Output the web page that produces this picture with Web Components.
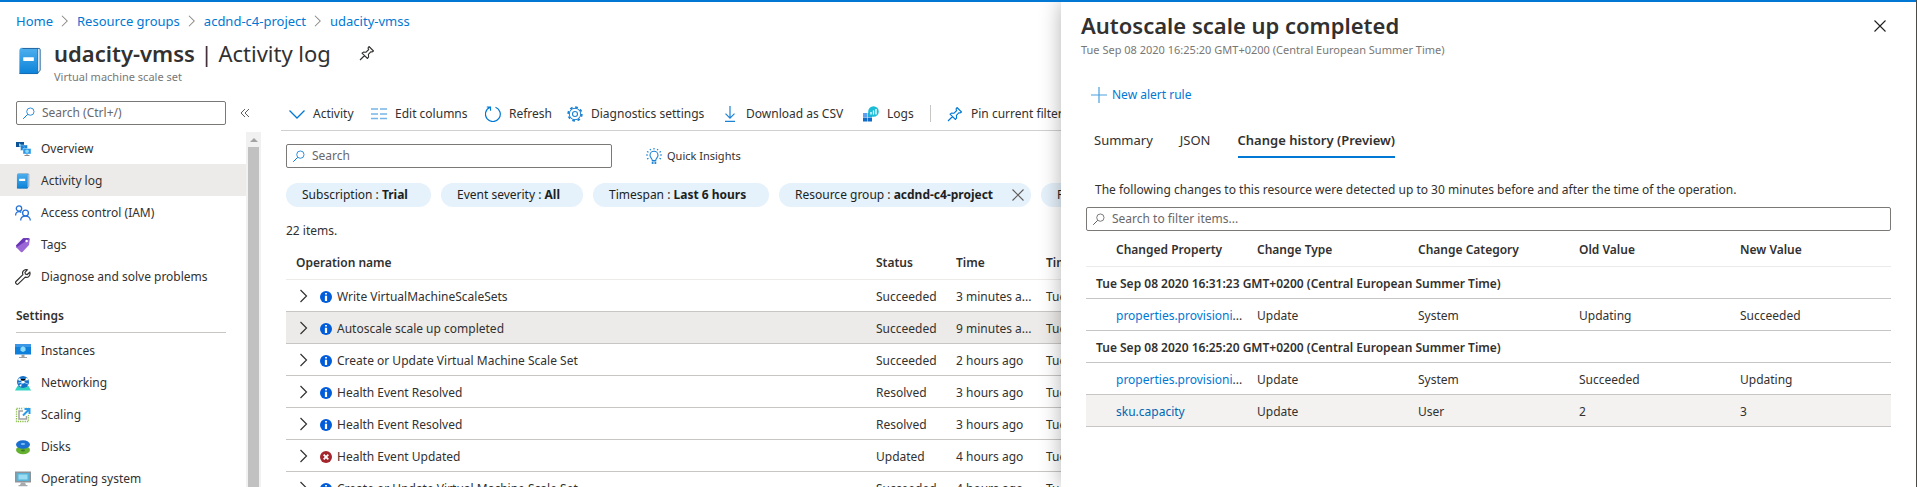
<!DOCTYPE html>
<html lang="en">
<head>
<meta charset="utf-8">
<title>udacity-vmss | Activity log</title>
<style>
  html, body { margin: 0; height: 100%; }
  body {
    font: 12px/16px "Noto Sans", "Open Sans", sans-serif;
    color: #323130;
    background: #fff;
    --link: #0078d4;
    --line: #c8c6c4;
    --line-soft: #edebe9;
  }
</style>
</head>
<body>
<portal-shell>
  <bread-crumbs slot="top"></bread-crumbs>
  <blade-title slot="top"></blade-title>
  <side-menu slot="menu"></side-menu>
  <activity-log slot="content"></activity-log>
  <detail-panel slot="detail"></detail-panel>
</portal-shell>
<script>
const define = (name, html, setup) => customElements.define(name, class extends HTMLElement {
  constructor() {
    super();
    const root = this.attachShadow({ mode: 'open' });
    const t = document.createElement('template');
    t.innerHTML = html;
    root.append(t.content.cloneNode(true));
    if (setup) setup(root);
  }
});

const book = `<defs><linearGradient id="g" x2="0" y2="1"><stop stop-color="#4fb0ee"/><stop offset="1" stop-color="#0d83d9"/></linearGradient></defs>
  <path d="M4 1.5h17.2q1.300 0 1.300 1.300V24l-2.500 3H4z" fill="#fff" stroke="#0f5b9c"/><path d="M1 4q0-3 3-3.500L4 2h16v25.500H1z" fill="url(#g)"/><path d="M20 2v25.500" stroke="#0f5b9c" stroke-width=".8"/><rect x="5" y="10.500" width="11" height="4" rx=".5" fill="#fff"/><path d="M1 27.500h19" stroke="#0c6ab4"/>`;
const chevron = '<path d="M4.500 2l6 6-6 6" fill="none" stroke="currentColor" stroke-width="1.200"/>';
const pin = '<path d="M10 1.500l4.500 4.500-1.500 1-1-.300-2.600 2.700.2 2.600-1.100 1.500L3 8.200l1.500-1.100 2.600.1L9.700 4.500 9 3zM5.600 10.500L1 15" fill="none" stroke="currentColor" stroke-width="1.100" stroke-linejoin="round"/>';
const ICONS = {
  book: ['0 0 24 29', book],
  chevron: ['0 0 16 16', chevron],
  pin: ['0 0 16 16', pin],
  search: ['0 0 16 16', '<circle cx="10.300" cy="5.700" r="4.500" fill="none" stroke="currentColor"/><path d="M7 9L1.500 14.500" stroke="currentColor" stroke-width="1.200"/>'],
  collapse: ['0 0 10 10', '<path d="M5 1L1 5l4 4M9 1L5 5l4 4" fill="none" stroke="#605e5c"/>'],
  down: ['0 0 16 16', '<path d="M.5 4.500L8 12l7.500-7.500" fill="none" stroke="#0078d4" stroke-width="1.300"/>'],
  columns: ['0 0 16 16', '<path d="M0 3h7M9 3h7M0 8h7M9 8h7M0 12.500h7M9 12.500h7" stroke="#75b5e7" stroke-width="1.700"/>'],
  refresh: ['0 0 16 16', '<path d="M10.500 1.200A7.400 7.400 0 1 1 4.800 1.400M1.800 1h3.700v3.700" fill="none" stroke="#0078d4" stroke-width="1.200"/>'],
  gear: ['0 0 16 16', '<circle cx="8" cy="8" r="6.800" fill="none" stroke="#1b82d4" stroke-width="1.800" stroke-dasharray="2.700 2.640"/><circle cx="8" cy="8" r="5.700" fill="none" stroke="#1b82d4"/><circle cx="8" cy="8" r="2.500" fill="none" stroke="#1b82d4" stroke-width="1.100"/>'],
  download: ['0 0 16 16', '<path d="M8 0v12M3.500 7.700L8 12.200l4.500-4.500M3 15.400h10" fill="none" stroke="#1b82d4" stroke-width="1.200"/>'],
  logs: ['0 0 16 16', '<path d="M0 7h4.500v4H0z" fill="#5ea0ef"/><path d="M0 11.500h4.500v4H0zM5 11.500h4v4H5z" fill="#0f6cc9"/><path d="M5 7h4v4H5z" fill="#2288e0"/><path d="M10.500.2a5.300 5.300 0 1 1 0 10.600H5.200V5.500A5.300 5.300 0 0 1 10.500.2z" fill="#1cbcd6"/><path d="M8 6v2.500M10.500 4.500v4M13 3v5.500" stroke="#fff" stroke-width="1.300"/>'],
  bulb: ['0 0 16 16', '<path d="M6.300 12.500c0-2-2.300-2.800-2.300-5.300a4 4 0 0 1 8 0c0 2.500-2.300 3.300-2.300 5.300zM6.300 14v2h3.400v-2z" fill="none" stroke="#1b82d4" stroke-width="1.100"/><path d="M8 0v1.500M4 1l.8 1.300M12 1l-.8 1.300M1 3.500l1.500.8M15 3.500l-1.500.8M0 7h2M14 7h2M1 11l1.500-.8M15 11l-1.500-.8" stroke="#1b82d4" stroke-width="1.200"/>'],
  close: ['0 0 12 12', '<path d="M.5.500l11 11M11.500.500l-11 11" stroke="currentColor" stroke-width="1.100"/>'],
  plus: ['0 0 16 16', '<path d="M8 0v16M0 8h16" stroke="#4a9fe0" stroke-width="1.200"/>'],
  info: ['0 0 12 12', '<circle cx="6" cy="6" r="6" fill="#015cda"/><path d="M5.100 2h1.800v1.600H5.100zM4.900 4.700h2.200V10H4.900z" fill="#fff"/>'],
  error: ['0 0 12 12', '<circle cx="6" cy="6" r="6" fill="#a4262c"/><path d="M3.700 3.700l4.600 4.600M8.300 3.700L3.700 8.300" stroke="#fff" stroke-width="1.800"/>'],
  vmss: ['0 0 16 16', '<path d="M1 1h8v5H1z" fill="#0b5394"/><path d="M5.500 4h7v5.500h-7z" fill="#1b84d8" stroke="#fff" stroke-width=".4"/><path d="M8 7.500h8V13H8z" fill="#2a9ae8" stroke="#fff" stroke-width=".4"/><path d="M9.500 14.500h5M12 13v1.500" stroke="#8a8886"/><path d="M4 2.500l1.500.8v1.500L4 5.500M8.500 5.500l1.500 1M12 8.800l1.500.8v1.500l-1.500.8-1.500-.8V9.600z" fill="#8fd8f7" stroke="#8fd8f7" stroke-width=".5"/>'],
  people: ['0 0 16 16', '<g fill="none" stroke="#2470d8" stroke-width="1.300"><circle cx="4" cy="3.500" r="2.700"/><path d="M.6 10.500C.6 8 2 6.700 4 6.700c1 0 1.700.3 2.300.8"/><circle cx="10.500" cy="8" r="2.900"/><path d="M5.700 15.500c0-3 2-4.400 4.800-4.400s4.800 1.400 4.800 4.400"/></g>'],
  tag: ['0 0 16 16', '<path d="M1 8.500L8.200 1.300 13.500 1q1.300 0 1.300 1.300L14 8l-6.500 7q-.8.700-1.600 0L1.200 10.200z" fill="#9b66d6"/><path d="M1 8.500L8.200 1.300 13.500 1l.5 1L2 10z" fill="#6a35b5"/><circle cx="11.600" cy="4" r="1.200" fill="#fff"/>'],
  wrench: ['0 0 16 16', '<path d="M14.800 3.300l-2.600 2.200-1.800-.4-.4-1.700L12.300.8C10.500.2 8.300 1 7.700 3c-.3 1-.1 1.900.2 2.700L1 12.500c-1.300 1.400.9 3.600 2.300 2.400l6.900-6.800c2.700 1.100 5.700-1.400 4.600-4.800z" fill="none" stroke="#323130" stroke-width="1.200"/>'],
  vm: ['0 0 16 16', '<path d="M0 1h16v10.500H0z" fill="#0f7fdc"/><path d="M0 1h16v3H0z" fill="#3b97e6"/><path d="M8 3.300l2.500 1.400v3L8 9 5.500 7.700v-3z" fill="#8fdcfa"/><path d="M6.500 11.500h3V14h-3zM4 14h8v1H4z" fill="#a3a3a3"/>'],
  network: ['0 0 16 16', '<path d="M2.500 11h11l2.500 4.500H0z" fill="#32d4c0"/><circle cx="8" cy="7" r="6" fill="#1570c8"/><path d="M4 4l4 3 4-3M8 7l-3 4M8 7l5 2M3 8l5-1" stroke="#a5d8ff" stroke-width=".9"/><circle cx="8" cy="7" r="1.600" fill="#fff"/><circle cx="4.500" cy="4.500" r="1.200" fill="#fff"/><circle cx="11.800" cy="4.300" r="1.200" fill="#fff"/><circle cx="5.500" cy="10.500" r="1" fill="#fff"/>'],
  scaling: ['0 0 16 16', '<path d="M1.500 1.500h12v13h-12z" fill="none" stroke="#8cbf4d" stroke-width="1.300" stroke-dasharray="1.300 1"/><path d="M8 4H4v8h7.500V9" fill="none" stroke="#a3a3a3" stroke-width="1.500"/><path d="M7 1h8v8z" fill="#fff"/><path d="M8 8.500l5.500-5.500M9.500 2h5v5" fill="none" stroke="#2b9be8" stroke-width="2"/>'],
  disks: ['0 0 16 16', '<ellipse cx="8" cy="11" rx="7" ry="4.200" fill="#66b132"/><ellipse cx="8" cy="11.500" rx="2" ry="1" fill="#3f7d1c"/><ellipse cx="8" cy="5.500" rx="7" ry="4.300" fill="#1a6fd0"/><ellipse cx="8" cy="5" rx="2.200" ry="1.100" fill="#7cc2f5"/>'],
  os: ['0 0 16 16', '<path d="M0 .5h16v11H0z" fill="#8f9296"/><path d="M1.500 2h13v8h-13z" fill="#59b4d9"/><path d="M3.500 3.500h9v5h-9z" fill="#9bdcf2"/><path d="M6 11.500h4l1 2.500H5zM3.500 14h9v1.200h-9z" fill="#a8abae"/>'],
  up: ['0 0 8 8', '<path d="M0 6l4-4 4 4z" fill="#a3a3a3"/>']
};
customElements.define('az-icon', class extends HTMLElement {
  connectedCallback() {
    if (this.shadowRoot) return;
    const [box, body] = ICONS[this.getAttribute('name')];
    this.attachShadow({ mode: 'open' }).innerHTML = `<style>:host{display:inline-block;flex:none;width:16px;height:16px;white-space:normal}svg{display:block;width:100%;height:100%}</style><svg viewBox="${box}" aria-hidden="true">${body}</svg>`;
  }
});

define('portal-shell', `
<style>
  :host { display: flex; flex-direction: column; box-sizing: border-box; height: 100vh; overflow: hidden; border-right: 1px solid #4c4c44; }
  .bar { flex: none; height: 2px; background: #0078d4; }
  .page { flex: 1; display: flex; min-height: 0; }
  .blade { flex: 1; min-width: 0; display: flex; flex-direction: column; overflow: hidden; }
  .body { flex: 1; min-height: 0; display: flex; }
</style>
<div class="bar"></div>
<div class="page">
  <main class="blade"><slot name="top"></slot><div class="body"><slot name="menu"></slot><slot name="content"></slot></div></main>
  <slot name="detail"></slot>
</div>`);

define('bread-crumbs', `
<style>
  :host { display: block; padding: 9px 16px 0; font-size: 13px; line-height: 20px; }
  nav { display: flex; align-items: center; gap: 5px; }
  a { color: var(--link); text-decoration: none; }
  az-icon { width: 14px; height: 14px; color: #8a8886; }
</style>
<nav aria-label="Breadcrumb">
  <a href="#">Home</a><az-icon name="chevron"></az-icon>
  <a href="#">Resource groups</a><az-icon name="chevron"></az-icon>
  <a href="#">acdnd-c4-project</a><az-icon name="chevron"></az-icon>
  <a href="#">udacity-vmss</a>
</nav>`);

define('blade-title', `
<style>
  :host { display: flex; align-items: center; gap: 12px; padding: 6px 18px 16px; height: 48px; }
  .book { width: 24px; height: 28px; }
  h1 { display: flex; align-items: center; margin: 0; font-size: 22px; line-height: 32px; font-weight: 400; white-space: pre; }
  b { font-weight: 600; }
  p { margin: 0; font-size: 11px; line-height: 16px; color: #797775; }
  button { display: flex; margin-left: 28px; padding: 0; border: 0; background: none; color: #323130; }
</style>
<az-icon class="book" name="book"></az-icon>
<div>
  <h1><b>udacity-vmss</b> | Activity log<button aria-label="Pin"><az-icon name="pin"></az-icon></button></h1>
  <p>Virtual machine scale set</p>
</div>`);

define('search-field', `
<style>
  :host { display: block; }
  label { display: flex; align-items: center; gap: 7px; box-sizing: border-box; height: 24px; padding: 0 5px; border: 1px solid #7a7977; border-radius: 2px; color: var(--glass, #0078d4); }
  az-icon { width: 13px; height: 13px; }
  input { flex: 1; min-width: 0; border: 0; padding: 0; outline: 0; font: inherit; background: none; color: #323130; }
  input::placeholder { color: #69676a; opacity: 1; }
</style>
<label><az-icon name="search"></az-icon><input type="text"></label>`);

const fillSearch = root => {
  customElements.upgrade(root);
  root.querySelectorAll('search-field').forEach(f => {
    const i = f.shadowRoot.querySelector('input');
    i.placeholder = f.getAttribute('hint');
    i.setAttribute('aria-label', f.getAttribute('hint'));
  });
};

define('menu-item', `
<style>
  :host { display: block; }
  a { display: flex; align-items: center; gap: 10px; box-sizing: border-box; height: 32px; padding: 2px 15px 0; color: inherit; text-decoration: none; }
  :host([current]) a { background: #edebe9; }
</style>
<a href="#"><slot name="icon"></slot><span><slot></slot></span></a>`);

const item = (icon, text, extra = '') => `<menu-item ${extra}><az-icon slot="icon" name="${icon}"></az-icon>${text}</menu-item>`;
define('side-menu', `
<style>
  :host { flex: none; display: flex; flex-direction: column; width: 262px; }
  .find { display: flex; align-items: center; gap: 14px; padding: 0 12px 0 16px; height: 24px; margin-bottom: 7px; }
  search-field { width: 210px; }
  button { display: flex; padding: 0; border: 0; background: none; }
  .find az-icon { width: 10px; height: 10px; }
  .scroll { flex: 1; min-height: 0; display: flex; }
  nav { flex: 1; overflow: hidden; }
  h2 { margin: 0 20px 1px 16px; padding: 16px 0 8px; font-size: 12px; line-height: 16px; font-weight: 600; border-bottom: 1px solid var(--line); }
  .bar { width: 15px; margin-right: 1px; background: #f1f1f1; display: flex; flex-direction: column; align-items: center; }
  .bar az-icon { width: 8px; height: 8px; margin: 4px 0 3px; }
  .thumb { flex: 1; width: 11px; background: #c1c1c1; }
</style>
<div class="find"><search-field hint="Search (Ctrl+/)"></search-field><button aria-label="Collapse menu"><az-icon name="collapse"></az-icon></button></div>
<div class="scroll">
  <nav aria-label="Resource menu">
    ${item('vmss', 'Overview')}${item('book', 'Activity log', 'current')}${item('people', 'Access control (IAM)')}${item('tag', 'Tags')}${item('wrench', 'Diagnose and solve problems')}
    <h2>Settings</h2>
    ${item('vm', 'Instances')}${item('network', 'Networking')}${item('scaling', 'Scaling')}${item('disks', 'Disks')}${item('os', 'Operating system')}
  </nav>
  <div class="bar"><az-icon name="up"></az-icon><div class="thumb"></div></div>
</div>`, fillSearch);

define('filter-pill', `
<style>
  :host { display: block; }
  button { display: flex; align-items: center; box-sizing: border-box; width: 100%; height: 24px; padding: 0 7px 0 16px; border: 0; border-radius: 12px; background: #e5f1fb; font: inherit; color: #201f1e; white-space: pre; }
  ::slotted(b) { font-weight: 700; }
  ::slotted(az-icon) { width: 12px; height: 12px; margin-left: auto; color: #605e5c; }
</style>
<button><slot></slot></button>`);

const cmd = (icon, text) => `<button><az-icon name="${icon}"></az-icon>${text}</button>`;
define('command-bar', `
<style>
  :host { display: grid; grid-template-columns: 82px 114px 82px 155px 141px 67px 17px 1fr; align-items: center; height: 29px; padding-left: 8px; border-bottom: 1px solid #d2d0ce; white-space: nowrap; }
  button { display: flex; align-items: center; gap: 8px; padding: 0 0 4px; border: 0; background: none; font: inherit; color: inherit; }
  .rule { width: 1px; height: 17px; margin-bottom: 5px; background: #c8c6c4; }
  button:last-child az-icon { color: #0078d4; }
</style>
${cmd('down', 'Activity')}${cmd('columns', 'Edit columns')}${cmd('refresh', 'Refresh')}${cmd('gear', 'Diagnostics settings')}${cmd('download', 'Download as CSV')}${cmd('logs', 'Logs')}<span class="rule"></span>${cmd('pin', 'Pin current filters')}`);

const rows = [
  ['info', 'Write VirtualMachineScaleSets', 'Succeeded', '3 minutes a...'],
  ['info', 'Autoscale scale up completed', 'Succeeded', '9 minutes a...'],
  ['info', 'Create or Update Virtual Machine Scale Set', 'Succeeded', '2 hours ago'],
  ['info', 'Health Event Resolved', 'Resolved', '3 hours ago'],
  ['info', 'Health Event Resolved', 'Resolved', '3 hours ago'],
  ['error', 'Health Event Updated', 'Updated', '4 hours ago'],
  ['info', 'Create or Update Virtual Machine Scale Set', 'Succeeded', '4 hours ago']
];
define('activity-table', `
<style>
  :host { display: block; }
  table { width: 1000px; table-layout: fixed; border-collapse: separate; border-spacing: 0; }
  th, td { box-sizing: border-box; height: 32px; padding: 3px 4px 0 10px; text-align: left; white-space: nowrap; border-bottom: 1px solid var(--line); font-weight: 400; }
  th { height: 36px; font-weight: 600; border-color: var(--line-soft); }
  .on td { background: #edebe9; }
  .op { display: flex; align-items: center; }
  .op button { display: flex; padding: 0; margin: 0 8px 2px 0; border: 0; background: none; color: #323130; }
  .op > az-icon { width: 12px; height: 12px; margin-right: 5px; }
</style>
<table>
  <colgroup><col style="width:580px"><col style="width:80px"><col style="width:90px"><col></colgroup>
  <thead><tr><th>Operation name</th><th>Status</th><th>Time</th><th>Time stamp</th></tr></thead>
  <tbody>${rows.map((r, i) => `<tr${i === 1 ? ' class="on"' : ''}><td><div class="op"><button aria-label="Expand"><az-icon name="chevron"></az-icon></button><az-icon name="${r[0]}"></az-icon>${r[1]}</div></td><td>${r[2]}</td><td>${r[3]}</td><td>Tue Sep 08</td></tr>`).join('')}</tbody>
</table>`);

define('activity-log', `
<style>
  :host { flex: 1; min-width: 0; overflow: hidden; padding-left: 19px; }
  .inner { padding-left: 5px; }
  .find { display: flex; align-items: center; gap: 34px; padding: 13px 0 15px; }
  search-field { width: 326px; }
  .quick { display: flex; align-items: center; gap: 5px; padding: 0; border: 0; background: none; font: inherit; font-size: 11px; line-height: 16px; color: inherit; }
  .pills { display: grid; grid-template-columns: 145px 142px 176px 252px 190px; gap: 10px; }
  p { margin: 0; padding: 16px 0 5px; }
</style>
<command-bar></command-bar>
<div class="inner">
  <div class="find"><search-field hint="Search"></search-field><button class="quick"><az-icon name="bulb"></az-icon>Quick Insights</button></div>
  <div class="pills">
    <filter-pill>Subscription : <b>Trial</b></filter-pill>
    <filter-pill>Event severity : <b>All</b></filter-pill>
    <filter-pill>Timespan : <b>Last 6 hours</b></filter-pill>
    <filter-pill>Resource group : <b>acdnd-c4-project</b><az-icon name="close"></az-icon></filter-pill>
    <filter-pill>Resource : <b>All</b></filter-pill>
  </div>
  <p>22 items.</p>
  <activity-table></activity-table>
</div>`, fillSearch);

const prov = '<a href="#">properties.provisioni</a>...';
const changes = [
  'Tue Sep 08 2020 16:31:23 GMT+0200 (Central European Summer Time)',
  [prov, 'Update', 'System', 'Updating', 'Succeeded'],
  'Tue Sep 08 2020 16:25:20 GMT+0200 (Central European Summer Time)',
  [prov, 'Update', 'System', 'Succeeded', 'Updating'],
  ['<a href="#">sku.capacity</a>', 'Update', 'User', '2', '3']
];
define('change-table', `
<style>
  :host { display: block; }
  table { width: 100%; table-layout: fixed; border-collapse: separate; border-spacing: 0; }
  th, td { box-sizing: border-box; height: 32px; padding: 3px 0 0 10px; text-align: left; white-space: nowrap; border-bottom: 1px solid var(--line); }
  th { font-weight: 600; }
  thead th { height: 36px; border-color: var(--line-soft); }
  thead th:first-child, td:first-child { padding-left: 30px; }
  tbody tr:last-child td { background: #f3f2f1; }
  a { color: var(--link); text-decoration: none; }
  tr:last-child a { color: #0066b4; }
</style>
<table>
  <thead><tr><th>Changed Property</th><th>Change Type</th><th>Change Category</th><th>Old Value</th><th>New Value</th></tr></thead>
  <tbody>${changes.map(c => typeof c === 'string' ? `<tr><th colspan="5">${c}</th></tr>` : `<tr>${c.map(x => `<td>${x}</td>`).join('')}</tr>`).join('')}</tbody>
</table>`);

define('detail-panel', `
<style>
  :host { flex: 0 1 855px; box-sizing: border-box; position: relative; z-index: 1; padding: 7px 25px 0 25px; background: #fff; box-shadow: 0 0 20px rgba(0,0,0,.3); clip-path: inset(0 0 0 -30px); }
  header { display: flex; justify-content: space-between; align-items: flex-start; margin-left: -5px; }
  h2 { margin: 0; font-size: 22px; line-height: 32px; font-weight: 600; }
  .when { margin: 0; font-size: 11px; line-height: 18px; color: #797775; }
  button { display: flex; align-items: center; padding: 0; border: 0; background: none; font: inherit; color: inherit; }
  .x { margin: 11px 5px 0 0; color: #201f1e; }
  .x az-icon { width: 12px; height: 12px; }
  .new { gap: 5px; margin: 26px 0 0 5px; color: var(--link); line-height: 20px; }
  .tabs { display: flex; gap: 27px; margin: 25px 0 0 8px; font-size: 13px; line-height: 20px; }
  .tabs button { padding-bottom: 6px; border-bottom: 2px solid transparent; }
  .tabs [aria-selected=true] { font-weight: 600; border-color: var(--link); }
  .note { margin: 24px 0 9px 9px; }
  search-field { --glass: #605e5c; }
</style>
<header><div><h2>Autoscale scale up completed</h2><p class="when">Tue Sep 08 2020 16:25:20 GMT+0200 (Central European Summer Time)</p></div><button class="x" aria-label="Close"><az-icon name="close"></az-icon></button></header>
<button class="new"><az-icon name="plus"></az-icon>New alert rule</button>
<div class="tabs" role="tablist"><button role="tab">Summary</button><button role="tab">JSON</button><button role="tab" aria-selected="true">Change history (Preview)</button></div>
<p class="note">The following changes to this resource were detected up to 30 minutes before and after the time of the operation.</p>
<search-field hint="Search to filter items..."></search-field>
<change-table></change-table>`, fillSearch);
</script>
</body>
</html>
